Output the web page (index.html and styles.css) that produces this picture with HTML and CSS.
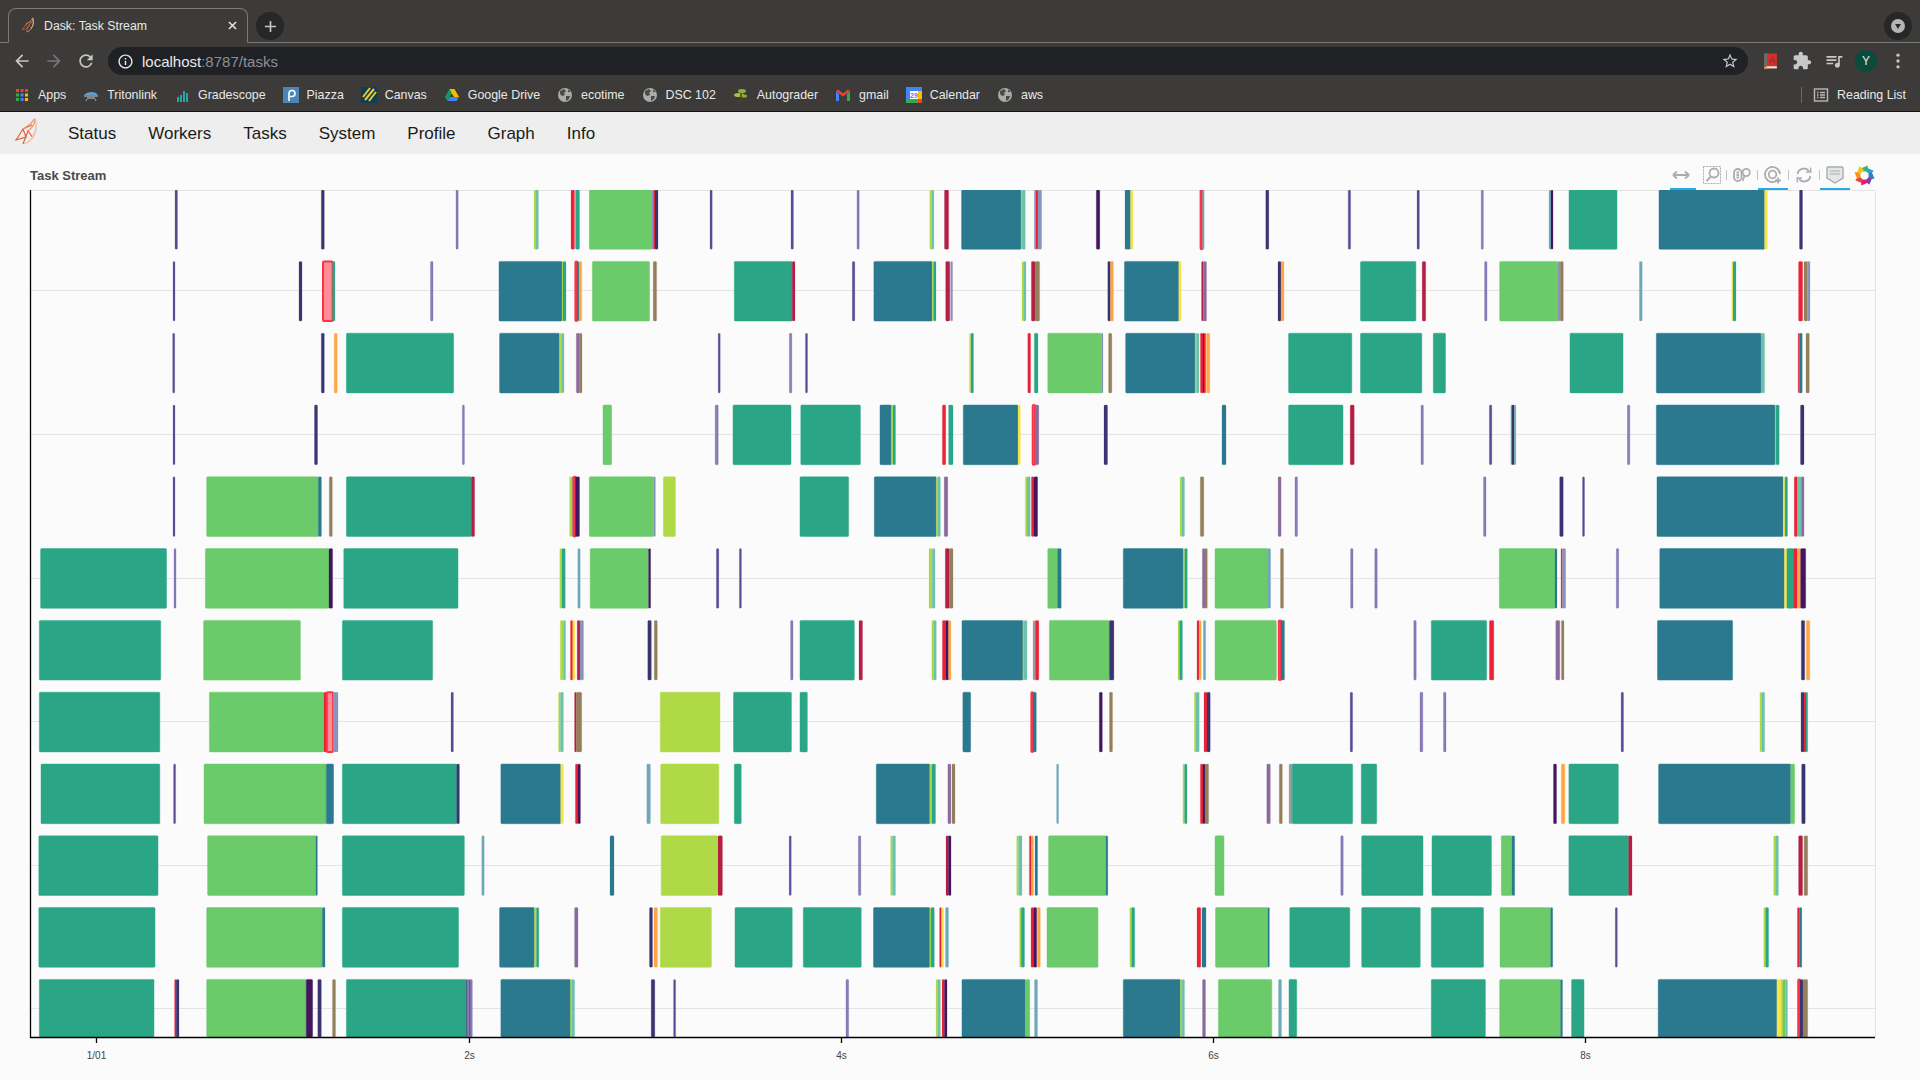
FILE: index.html
```html
<!DOCTYPE html>
<html lang="en">
<head>
    <meta charset="UTF-8">
    <meta name="viewport" content="width=device-width, initial-scale=1.0">
    <title>Dask: Task Stream</title>
    <link rel="stylesheet" href="styles.css">
</head>
<body>
    <svg class="defs">
        <symbol id="dask" viewBox="0 0 40 40">
            <path class="flame-a" d="M6 27 L13 16 L16 24 Z"/>
            <path class="flame-a" d="M13 31 L18 18 L23 25 M13 16 L22 12"/>
            <path class="flame-b" d="M13 16 C18 13 22 11 24 6 M18 18 C22 15 25 11 25 6"/>
            <path class="flame-c" d="M14 31 C23 28 29 17 25 5 M22 24 C26 19 27 12 25 6"/>
        </symbol>
        <symbol id="globe" viewBox="0 0 16 16">
            <circle cx="8" cy="8" r="7" fill="#ababab"/>
            <path d="M3 4 L7 2 L9 4 L7 6 L8 8 L5 9 L3 7 Z M9 9 L13 9 L12 12 L9 14 Z M11 2.5 L14 5 L11 5 Z" fill="#4a4a48"/>
        </symbol>
    </svg>

    <div class="tabstrip">
        <div class="tab">
            <svg class="favicon"><use href="#dask"/></svg>
            <span class="tab-title">Dask: Task Stream</span>
            <svg class="tab-close" viewBox="0 0 10 10"><path d="M1 1 L9 9 M9 1 L1 9"/></svg>
        </div>
        <div class="round-btn new-tab">
            <svg viewBox="0 0 14 14"><path d="M7 1 V13 M1 7 H13"/></svg>
        </div>
        <div class="round-btn tab-menu"><span class="tab-menu-dot"></span></div>
    </div>

    <div class="toolbar">
        <div class="tool"><svg viewBox="0 0 24 24" class="ico"><path d="M20 11H7.83l5.59-5.59L12 4l-8 8 8 8 1.41-1.41L7.83 13H20v-2z"/></svg></div>
        <div class="tool tool-off"><svg viewBox="0 0 24 24" class="ico"><path d="M12 4l-1.41 1.41L16.17 11H4v2h12.17l-5.58 5.59L12 20l8-8z"/></svg></div>
        <div class="tool"><svg viewBox="0 0 24 24" class="ico"><path d="M17.65 6.35A7.958 7.958 0 0012 4c-4.42 0-7.99 3.58-7.99 8s3.57 8 7.99 8c3.73 0 6.84-2.55 7.73-6h-2.08A5.99 5.99 0 0112 18c-3.31 0-6-2.69-6-6s2.69-6 6-6c1.66 0 3.14.69 4.22 1.78L13 11h7V4l-2.35 2.35z"/></svg></div>
        <div class="address">
            <svg viewBox="0 0 24 24" class="ico ico-info"><path d="M11 7h2v2h-2zm0 4h2v6h-2zm1-9C6.48 2 2 6.48 2 12s4.48 10 10 10 10-4.48 10-10S17.52 2 12 2zm0 18c-4.41 0-8-3.59-8-8s3.59-8 8-8 8 3.59 8 8-3.59 8-8 8z"/></svg>
            <span class="url"><span class="url-host">localhost</span>:8787/tasks</span>
            <svg viewBox="0 0 24 24" class="ico ico-star"><path d="M22 9.24l-7.19-.62L12 2 9.19 8.63 2 9.24l5.46 4.73L5.82 21 12 17.27 18.18 21l-1.63-7.03L22 9.24zM12 15.4l-3.76 2.27 1-4.28-3.32-2.88 4.38-.38L12 6.1l1.71 4.04 4.38.38-3.32 2.88 1 4.28L12 15.4z"/></svg>
        </div>
        <div class="tool">
            <svg viewBox="0 0 16 16" class="ext-book">
                <rect x="2" y="0.5" width="12" height="14" fill="#cf322b"/>
                <rect x="2" y="0.5" width="3" height="14" fill="#6a6a6a"/>
                <text x="9.5" y="9" class="book-letter">A</text>
                <rect x="4" y="12.5" width="10" height="2" fill="#e6e6e6"/>
                <rect x="2" y="13" width="3" height="2" fill="#e0a020"/>
            </svg>
        </div>
        <div class="tool"><svg viewBox="0 0 24 24" class="ico"><path d="M20.5 11H19V7c0-1.1-.9-2-2-2h-4V3.5C13 2.12 11.88 1 10.5 1S8 2.12 8 3.5V5H4c-1.1 0-1.99.9-1.99 2v3.8H3.5c1.49 0 2.7 1.21 2.7 2.7s-1.21 2.7-2.7 2.7H2V20c0 1.1.9 2 2 2h3.8v-1.5c0-1.49 1.21-2.7 2.7-2.7 1.49 0 2.7 1.21 2.7 2.7V22H17c1.1 0 2-.9 2-2v-4h1.5c1.38 0 2.5-1.12 2.5-2.5S21.88 11 20.5 11z"/></svg></div>
        <div class="tool"><svg viewBox="0 0 24 24" class="ico"><path d="M15 6H3v2h12V6zm0 4H3v2h12v-2zM3 16h8v-2H3v2zM17 6v8.18c-.31-.11-.65-.18-1-.18-1.66 0-3 1.34-3 3s1.34 3 3 3 3-1.34 3-3V8h3V6h-5z"/></svg></div>
        <div class="tool"><span class="avatar">Y</span></div>
        <div class="tool"><svg viewBox="0 0 24 24" class="ico"><circle cx="12" cy="5" r="2"/><circle cx="12" cy="12" r="2"/><circle cx="12" cy="19" r="2"/></svg></div>
    </div>

    <div class="bookmarks">
        <div class="mark">
            <svg class="mark-ico" viewBox="0 0 16 16">
                <rect x="2" y="2" width="3" height="3" fill="#ea4335"/><rect x="6.5" y="2" width="3" height="3" fill="#ea4335"/><rect x="11" y="2" width="3" height="3" fill="#ea4335"/>
                <rect x="2" y="6.5" width="3" height="3" fill="#34a853"/><rect x="6.5" y="6.5" width="3" height="3" fill="#4285f4"/><rect x="11" y="6.5" width="3" height="3" fill="#fbbc04"/>
                <rect x="2" y="11" width="3" height="3" fill="#34a853"/><rect x="6.5" y="11" width="3" height="3" fill="#4285f4"/><rect x="11" y="11" width="3" height="3" fill="#fbbc04"/>
            </svg>
            <span>Apps</span>
        </div>
        <div class="mark">
            <svg class="mark-ico" viewBox="0 0 16 16">
                <path d="M1 8 C4 5 9 4 13 6 L15 8 Z" fill="#5f9fc9"/>
                <path d="M1 9 H15 M4 11 H12" stroke="#b9d3e4" fill="none"/>
                <path d="M4 12 L3 14 M12 12 L13 14" stroke="#7fb2d2" fill="none"/>
            </svg>
            <span>Tritonlink</span>
        </div>
        <div class="mark">
            <svg class="mark-ico" viewBox="0 0 16 16">
                <rect x="3" y="10" width="2" height="5" fill="#2aa5a8"/><rect x="6" y="8" width="2" height="7" fill="#2aa5a8"/>
                <rect x="9" y="4" width="2" height="11" fill="#2aa5a8"/><rect x="12" y="6" width="2" height="9" fill="#2aa5a8"/>
            </svg>
            <span>Gradescope</span>
        </div>
        <div class="mark">
            <svg class="mark-ico" viewBox="0 0 16 16">
                <rect width="16" height="16" fill="#4a86bb"/>
                <path d="M6 14 V6.5 A3 3 0 1 1 9 9.5 H7" stroke="#fff" stroke-width="1.6" fill="none"/>
            </svg>
            <span>Piazza</span>
        </div>
        <div class="mark">
            <svg class="mark-ico" viewBox="0 0 16 16">
                <rect width="16" height="16" fill="#0c3f50"/>
                <path d="M2 10 L9 1 M4 13 L13 2 M8 14 L15 5" stroke="#f2c531" stroke-width="2" fill="none"/>
            </svg>
            <span>Canvas</span>
        </div>
        <div class="mark">
            <svg class="mark-ico" viewBox="0 0 16 16">
                <path d="M5.5 2 H10.5 L8 7 L5.5 7 Z" fill="#fbbc04"/>
                <path d="M5.5 2 L1 10 L3.5 14 L8 6 Z" fill="#0f9d58"/>
                <path d="M10.5 2 L15 10 H10 L7.5 6 Z" fill="#fbbc04"/>
                <path d="M3.5 14 H12.5 L15 10 H6 Z" fill="#4285f4"/>
            </svg>
            <span>Google Drive</span>
        </div>
        <div class="mark"><svg class="mark-ico"><use href="#globe"/></svg><span>ecotime</span></div>
        <div class="mark"><svg class="mark-ico"><use href="#globe"/></svg><span>DSC 102</span></div>
        <div class="mark">
            <svg class="mark-ico" viewBox="0 0 16 16">
                <ellipse cx="9" cy="4" rx="4" ry="2" fill="#8eb03c"/>
                <ellipse cx="6" cy="8" rx="5" ry="2" fill="#a4c24a"/>
                <ellipse cx="11" cy="9" rx="3" ry="1.5" fill="#8eb03c"/>
                <path d="M8 6 V13" stroke="#5a3c22" stroke-width="1.6"/>
                <rect x="4" y="13" width="8" height="1.5" fill="#5a3c22"/>
            </svg>
            <span>Autograder</span>
        </div>
        <div class="mark">
            <svg class="mark-ico" viewBox="0 0 16 16">
                <path d="M1 4 V14 H4 V7 Z" fill="#4285f4"/>
                <path d="M12 7 V14 H15 V4 Z" fill="#34a853"/>
                <path d="M1 4 L3 2.5 L8 6.5 L13 2.5 L15 4 L8 9.5 Z" fill="#ea4335"/>
            </svg>
            <span>gmail</span>
        </div>
        <div class="mark">
            <svg class="mark-ico" viewBox="0 0 16 16">
                <rect width="16" height="16" fill="#4285f4"/>
                <rect x="12" y="4" width="4" height="8" fill="#fbbc04"/>
                <rect y="12" width="12" height="4" fill="#34a853"/>
                <rect x="12" y="12" width="4" height="4" fill="#ea4335"/>
                <rect x="4" y="4" width="8" height="8" fill="#fff"/>
                <text x="8" y="10.5" class="cal-day">29</text>
            </svg>
            <span>Calendar</span>
        </div>
        <div class="mark"><svg class="mark-ico"><use href="#globe"/></svg><span>aws</span></div>
        <div class="reading">
            <span class="reading-sep"></span>
            <svg class="mark-ico" viewBox="0 0 16 16">
                <rect x="1.5" y="2" width="13" height="12" fill="none" stroke="#b8b8b8" stroke-width="1.4"/>
                <path d="M4 5.5 H5.5 M7 5.5 H12 M4 8 H5.5 M7 8 H12 M4 10.5 H5.5 M7 10.5 H12" stroke="#b8b8b8" stroke-width="1.3"/>
            </svg>
            <span>Reading List</span>
        </div>
    </div>

    <nav class="nav">
        <svg class="nav-logo"><use href="#dask"/></svg>
        <a class="nav-link">Status</a>
        <a class="nav-link">Workers</a>
        <a class="nav-link">Tasks</a>
        <a class="nav-link">System</a>
        <a class="nav-link">Profile</a>
        <a class="nav-link">Graph</a>
        <a class="nav-link">Info</a>
    </nav>

    <main class="plot">
        <div class="plot-head">
            <span class="plot-title">Task Stream</span>
            <div class="plot-tools">
                <div class="pt pt-pan pt-on">
                    <svg viewBox="0 0 20 12" class="pt-ico pt-wide"><path d="M2 6 H18 M2 6 L6 2.5 M2 6 L6 9.5 M18 6 L14 2.5 M18 6 L14 9.5"/></svg>
                </div>
                <div class="pt">
                    <svg viewBox="0 0 18 18" class="pt-ico">
                        <rect x="0.5" y="0.5" width="17" height="17" class="pt-dash"/>
                        <circle cx="11" cy="7" r="4.5"/>
                        <path d="M8 10.5 L3.5 15"/>
                    </svg>
                </div>
                <span class="pt-sep"></span>
                <div class="pt pt-cell">
                    <svg viewBox="0 0 18 18" class="pt-ico">
                        <rect x="1" y="3" width="7.5" height="12" rx="3.7"/>
                        <path d="M3.5 6.5 H6 M3.5 9 H6 M3.5 11.5 H6"/>
                        <circle cx="13.2" cy="6.5" r="3.6"/>
                        <path d="M11.5 10 L9.5 15"/>
                    </svg>
                </div>
                <span class="pt-sep"></span>
                <div class="pt pt-cell pt-on">
                    <svg viewBox="0 0 18 18" class="pt-ico">
                        <path d="M13 14.5 A7.5 7.5 0 1 1 16 8"/>
                        <circle cx="8.5" cy="8.5" r="3.8"/>
                        <path d="M11 14.5 H17 M14 11.5 V17.5"/>
                    </svg>
                </div>
                <span class="pt-sep"></span>
                <div class="pt pt-cell">
                    <svg viewBox="0 0 18 18" class="pt-ico">
                        <path d="M2.5 8 A6.5 6.5 0 0 1 14 5"/>
                        <path d="M15.5 10 A6.5 6.5 0 0 1 4 13"/>
                        <path d="M11 6 L16 6 L15.5 1.5" class="pt-thin"/>
                        <path d="M7 12 L2 12 L2.5 16.5" class="pt-thin"/>
                    </svg>
                </div>
                <span class="pt-sep"></span>
                <div class="pt pt-cell pt-on">
                    <svg viewBox="0 0 18 18" class="pt-ico pt-solid">
                        <path d="M2 1 H16 A1 1 0 0 1 17 2 V12 L9 17 L1 12 V2 A1 1 0 0 1 2 1 Z"/>
                        <path d="M4 5 H14 M4 8 H14" class="pt-lines"/>
                    </svg>
                </div>
                <div class="pt pt-logo">
                    <svg viewBox="-10 -10 20 20" class="pt-ico-logo">
                        <path fill="#3fb36b" transform="rotate(0)" d="M-3 -7 L3 -9.5 L3.4 -4 L-1.6 -3.8 Z"/>
                        <path fill="#25a9c4" transform="rotate(45)" d="M-3 -7 L3 -9.5 L3.4 -4 L-1.6 -3.8 Z"/>
                        <path fill="#3b78c4" transform="rotate(90)" d="M-3 -7 L3 -9.5 L3.4 -4 L-1.6 -3.8 Z"/>
                        <path fill="#7c3fa3" transform="rotate(135)" d="M-3 -7 L3 -9.5 L3.4 -4 L-1.6 -3.8 Z"/>
                        <path fill="#e3187c" transform="rotate(180)" d="M-3 -7 L3 -9.5 L3.4 -4 L-1.6 -3.8 Z"/>
                        <path fill="#f0432f" transform="rotate(225)" d="M-3 -7 L3 -9.5 L3.4 -4 L-1.6 -3.8 Z"/>
                        <path fill="#f98f1e" transform="rotate(270)" d="M-3 -7 L3 -9.5 L3.4 -4 L-1.6 -3.8 Z"/>
                        <path fill="#f2c51d" transform="rotate(315)" d="M-3 -7 L3 -9.5 L3.4 -4 L-1.6 -3.8 Z"/>
                    </svg>
                </div>
            </div>
        </div>

        <svg class="chart" viewBox="0 190 1920 890">
            <path class="grid" d="M31 190.5 H1875.5 V1037 M31 290.5 H1875 M31 434.5 H1875 M31 578.5 H1875 M31 721.5 H1875 M31 865.5 H1875 M31 1008.5 H1875"/>
            <g id="bars"></g>
            <path class="axis" d="M30.5 190 V1037.5 H1875 M96.5 1037 V1043 M469.5 1037 V1043 M841.5 1037 V1043 M1213.5 1037 V1043 M1585.5 1037 V1043"/>
            <text class="tick" x="96.5" y="1059">1/01</text>
            <text class="tick" x="469.5" y="1059">2s</text>
            <text class="tick" x="841.5" y="1059">4s</text>
            <text class="tick" x="1213.5" y="1059">6s</text>
            <text class="tick" x="1585.5" y="1059">8s</text>
        </svg>
    </main>

    <script src="chart.js"></script>
</body>
</html>
```

FILE: styles.css
```css
html, body {
    margin: 0;
    padding: 0;
}
body {
    width: 1920px;
    height: 1080px;
    overflow: hidden;
    background-color: #fbfbfb;
    font-family: "Liberation Sans", Arial, sans-serif;
}
.defs {
    position: absolute;
    width: 0;
    height: 0;
}

/* browser chrome */
.tabstrip {
    box-sizing: border-box;
    height: 43px;
    display: flex;
    align-items: flex-end;
    padding-left: 8px;
    padding-right: 8px;
    background-color: #3c3b39;
    border-bottom: 1px solid #7b7b79;
}
.tab {
    box-sizing: border-box;
    width: 240px;
    height: 35px;
    margin-bottom: -1px;
    display: flex;
    align-items: center;
    padding: 0 10px 0 12px;
    background-color: #3c3b39;
    border: 1px solid #7b7b79;
    border-bottom-color: #3c3b39;
    border-radius: 8px 8px 0 0;
}
.favicon {
    width: 22px;
    height: 22px;
    margin-left: -2px;
    margin-right: 3px;
}
.tab-title {
    flex: 1;
    font-size: 12.3px;
    color: #e8e8e8;
}
.tab-close {
    width: 9px;
    height: 9px;
    fill: none;
    stroke: #e8e8e8;
    stroke-width: 1.6;
}
.round-btn {
    width: 28px;
    height: 28px;
    margin-bottom: 2px;
    display: flex;
    align-items: center;
    justify-content: center;
    border-radius: 50%;
    background-color: #272727;
}
.new-tab {
    margin-left: 8px;
}
.new-tab svg {
    width: 13px;
    height: 13px;
    fill: none;
    stroke: #c4c4c4;
    stroke-width: 1.8;
}
.tab-menu {
    margin-left: auto;
}
.tab-menu-dot {
    position: relative;
    width: 14px;
    height: 14px;
    border-radius: 50%;
    background-color: #b5b5b5;
}
.tab-menu-dot::after {
    content: "";
    position: absolute;
    left: 3.5px;
    top: 5px;
    border-left: 3.5px solid transparent;
    border-right: 3.5px solid transparent;
    border-top: 5px solid #2a2a2a;
}

.toolbar {
    height: 36px;
    display: flex;
    align-items: center;
    padding: 0 6px;
    background-color: #3c3b39;
}
.tool {
    width: 32px;
    height: 28px;
    display: flex;
    align-items: center;
    justify-content: center;
    flex-shrink: 0;
}
.ico {
    width: 20px;
    height: 20px;
    fill: #c8c8c8;
}
.tool-off .ico {
    fill: #76767a;
}
.address {
    flex: 1;
    height: 28px;
    margin: 0 6px;
    display: flex;
    align-items: center;
    padding: 0 9px 0 9px;
    border-radius: 14px;
    background-color: #202124;
}
.ico-info {
    width: 17px;
    height: 17px;
    fill: #e8eaed;
}
.url {
    flex: 1;
    margin-left: 8px;
    font-size: 15px;
    color: #8d9094;
}
.url-host {
    color: #e8eaed;
}
.ico-star {
    width: 18px;
    height: 18px;
    fill: #c8c8c8;
}
.ext-book {
    width: 17px;
    height: 17px;
}
.book-letter {
    font-size: 9px;
    text-anchor: middle;
    fill: #8f1f1a;
}
.avatar {
    width: 22px;
    height: 22px;
    display: flex;
    align-items: center;
    justify-content: center;
    border-radius: 50%;
    background-color: #0b4b3c;
    font-size: 12px;
    color: #e8e8e8;
}

.bookmarks {
    box-sizing: border-box;
    height: 33px;
    display: flex;
    align-items: center;
    gap: 17px;
    padding: 0 14px;
    background-color: #3c3b39;
    border-bottom: 1px solid #141414;
    font-size: 12.4px;
    color: #e8e8e8;
}
.mark {
    display: flex;
    align-items: center;
    gap: 8px;
}
.mark-ico {
    width: 16px;
    height: 16px;
    flex-shrink: 0;
}
.cal-day {
    font-size: 7px;
    font-weight: bold;
    text-anchor: middle;
    fill: #4285f4;
}
.reading {
    margin-left: auto;
    display: flex;
    align-items: center;
    gap: 8px;
}
.reading-sep {
    width: 1px;
    height: 16px;
    margin-right: 3px;
    background-color: #6a6a68;
}

/* dask nav */
.nav {
    box-sizing: border-box;
    height: 42px;
    display: flex;
    align-items: center;
    padding-left: 10px;
    background-color: #eeeeee;
}
.nav-logo {
    width: 40px;
    height: 40px;
    margin-right: 2px;
}
.flame-a, .flame-b, .flame-c {
    fill: none;
    stroke-width: 1.2;
}
.flame-a {
    stroke: #dc6238;
}
.flame-b {
    stroke: #ec9566;
}
.flame-c {
    stroke: #f3bf98;
}
.nav-link {
    padding: 2px 16px 0;
    font-size: 17px;
    color: #1a1a1a;
}

/* plot */
.plot-head {
    height: 36px;
    display: flex;
    align-items: stretch;
    justify-content: space-between;
    padding: 0 45px 0 30px;
}
.plot-title {
    align-self: center;
    margin-top: 6px;
    font-size: 13px;
    font-weight: bold;
    color: #4a4a4a;
}
.plot-tools {
    display: flex;
    align-items: stretch;
}
.pt {
    box-sizing: border-box;
    width: 28px;
    display: flex;
    align-items: center;
    justify-content: center;
    padding-top: 8px;
    border-bottom: 2px solid transparent;
}
.pt-pan {
    width: 26px;
    margin-right: 2px;
    padding-right: 4px;
}
.pt-cell {
    width: 30px;
}
.pt-on {
    border-bottom-color: #26aae1;
}
.pt-sep {
    align-self: center;
    width: 1px;
    height: 10px;
    margin-top: 6px;
    background-color: #c4c4c4;
}
.pt-ico {
    width: 18px;
    height: 18px;
    fill: none;
    stroke: #a9adb0;
    stroke-width: 1.8;
}
.pt-wide {
    width: 20px;
    height: 12px;
}
.pt-dash {
    stroke-width: 1;
    stroke-dasharray: 2 1;
}
.pt-thin {
    stroke-width: 1.4;
}
.pt-solid {
    fill: #e4e6e7;
    stroke-width: 1.4;
}
.pt-lines {
    stroke-width: 1.2;
}
.pt-logo {
    width: 24px;
    margin-left: 1px;
    justify-content: flex-end;
}
.pt-ico-logo {
    width: 21px;
    height: 21px;
}

.chart {
    display: block;
    width: 1920px;
    height: 890px;
}
.grid {
    fill: none;
    stroke: #e4e4e4;
    stroke-width: 1;
}
.axis {
    fill: none;
    stroke: #000000;
    stroke-width: 1.3;
}
.tick {
    font-size: 10px;
    text-anchor: middle;
    fill: #444444;
}

/* task bars, one class per colour */
.bar {
    stroke-width: 1;
    stroke-opacity: 0.45;
}
.bar-thin {
    stroke-width: 0.5;
}
.c-t { fill: #2aa687; stroke: #2aa687; }
.c-g { fill: #6bca69; stroke: #6bca69; }
.c-l { fill: #afd946; stroke: #afd946; }
.c-b { fill: #2b798e; stroke: #2b798e; }
.c-p { fill: #5a4a94; stroke: #5a4a94; }
.c-q { fill: #8d7cb8; stroke: #57459a; }
.c-n { fill: #3a3472; stroke: #3a3472; }
.c-d { fill: #41165f; stroke: #41165f; }
.c-r { fill: #ea2236; stroke: #ea2236; }
.c-c { fill: #b51f45; stroke: #b51f45; }
.c-o { fill: #ffa544; stroke: #ffa544; }
.c-y { fill: #f6e44c; stroke: #f6e44c; }
.c-s { fill: #ff8d97; stroke: #ff3344; stroke-width: 2; stroke-opacity: 1; }
.c-a { fill: #6ea9ba; stroke: #6ea9ba; }
.c-e { fill: #6ec1ab; stroke: #6ec1ab; }
.c-i { fill: #8a94ba; stroke: #8a94ba; }
.c-k { fill: #93805a; stroke: #93805a; }
.c-m { fill: #8a6a9c; stroke: #8a6a9c; }
.c-h { fill: #9c9c9c; stroke: #9c9c9c; }
```

FILE: chart.js
```js
// task bars as [start, end, colour], one list per worker row
var rows = [
    [
        [175, 177.5, "p"], [321.3, 324.3, "n"], [456, 458.2, "q"], [534, 535.6, "l"], [535.6, 538.4, "e"],
        [571, 574.5, "r"], [575.5, 579.5, "t"], [589.3, 651.5, "g"], [651.5, 653.5, "i"], [653.5, 655, "r"], [655, 658, "n"],
        [710, 712.2, "p"], [791, 793.4, "p"], [857, 859.2, "q"], [929.8, 931.6, "l"], [931.6, 933.9, "e"],
        [944.5, 948.6, "c"], [961.6, 1021, "b"], [1021, 1022, "l"], [1022, 1025.3, "e"],
        [1034.3, 1036, "i"], [1036, 1038, "r"], [1038, 1041.6, "i"], [1096.3, 1099.8, "d"],
        [1125, 1130.6, "b"], [1130.6, 1133, "y"], [1200.6, 1202.4, "s"], [1202.4, 1204.2, "a"], [1265.8, 1268.8, "n"],
        [1348.2, 1350.6, "p"], [1417, 1419.4, "p"], [1481.2, 1483.4, "q"], [1549, 1551, "a"], [1551, 1553, "d"],
        [1569, 1617, "t"], [1659, 1764.6, "b"], [1764.6, 1767.4, "y"], [1799.5, 1802.5, "n"]
    ],
    [
        [173, 175, "p"], [299, 302, "n"], [323, 332.6, "s"], [332.6, 335, "t"], [430.5, 433, "q"],
        [499, 562, "b"], [562, 563, "l"], [563, 566, "t"], [575.4, 577, "s"], [577, 579, "b"], [579, 581.7, "o"],
        [592.4, 649.5, "g"], [653.2, 656.6, "k"],
        [734.3, 792.2, "t"], [792.2, 795, "c"], [852.3, 854.8, "p"], [873.9, 932.2, "b"], [932.2, 933.6, "l"], [933.6, 936, "t"],
        [945.7, 949.8, "c"], [950.6, 952.6, "i"], [1022, 1023.5, "l"], [1023.5, 1026, "e"], [1031.4, 1035, "c"], [1035, 1039.6, "k"],
        [1107.8, 1110.5, "n"], [1110.5, 1113.5, "o"], [1124.5, 1178.8, "b"], [1178.8, 1181.2, "y"], [1201.6, 1203.4, "c"], [1203.4, 1206.5, "m"],
        [1278, 1281, "n"], [1281, 1284, "o"],
        [1360.5, 1415.9, "t"], [1422.2, 1425.7, "c"], [1484.6, 1487, "q"], [1499.7, 1557.8, "g"], [1557.8, 1560.2, "i"], [1560.2, 1563.3, "k"],
        [1639.4, 1642.2, "a"], [1731.8, 1733, "y"], [1733, 1736, "t"], [1798.6, 1802.6, "r"], [1804, 1807.3, "k"], [1807.3, 1810, "i"]
    ],
    [
        [172.7, 174.7, "p"], [321.3, 324.3, "n"], [334.2, 337.2, "o"], [346.4, 453.6, "t"],
        [499.6, 559.4, "b"], [559.4, 562, "l"], [562, 564, "e"], [576.3, 579.5, "m"], [579.5, 582, "k"],
        [718.2, 720.2, "p"], [789.4, 791.8, "q"], [805.5, 807.5, "p"], [969, 970.8, "y"], [970.8, 973.5, "t"],
        [1027.8, 1030.6, "r"], [1034.3, 1038, "t"], [1047.8, 1101.6, "g"], [1101.6, 1103, "i"], [1108.6, 1111.8, "k"],
        [1125.7, 1195, "b"], [1195, 1196.2, "l"], [1196.2, 1199, "e"], [1200.4, 1203, "r"], [1203, 1204, "d"], [1204, 1205.7, "r"], [1206.5, 1209.8, "o"],
        [1288.6, 1351.8, "t"], [1360.5, 1421.8, "t"], [1433.3, 1445.5, "t"], [1570, 1623, "t"],
        [1656.3, 1761, "b"], [1761, 1764.6, "e"], [1798.2, 1799.6, "r"], [1799.6, 1802.2, "b"], [1806, 1809.3, "k"]
    ],
    [
        [173, 175, "p"], [314.5, 317.5, "n"], [462.4, 464.4, "q"], [603, 611.6, "g"],
        [715.2, 718.2, "q"], [733, 791, "t"], [800.8, 860.4, "t"], [880, 891.4, "b"], [891.4, 893, "l"], [893, 895.5, "t"],
        [942.4, 945.7, "r"], [948.6, 953, "t"], [963.3, 1018, "b"], [1018, 1020.4, "y"], [1032.7, 1035, "s"], [1035, 1038.8, "m"],
        [1104, 1107.5, "n"], [1222, 1226, "b"], [1288.6, 1343, "t"], [1350.2, 1354.2, "c"],
        [1421, 1423.4, "q"], [1489.4, 1491.8, "p"], [1510.8, 1511.8, "e"], [1511.8, 1514.5, "n"], [1514.5, 1516, "e"],
        [1627.4, 1629.8, "q"], [1656.3, 1775, "b"], [1775, 1776, "l"], [1776, 1779.2, "t"], [1800.5, 1804, "n"]
    ],
    [
        [173, 175, "p"], [206.7, 318.3, "g"], [318.3, 321.4, "b"], [329.3, 332.3, "k"], [346.4, 471.4, "t"], [471.4, 474.6, "c"],
        [569.6, 571.5, "l"], [571.5, 573.5, "e"], [573.5, 575.5, "s"], [575.5, 579.5, "d"], [589.3, 653.6, "g"], [653.6, 655.4, "i"], [663.4, 675.4, "l"],
        [800, 848.6, "t"], [874.3, 936.3, "b"], [936.3, 937.8, "l"], [937.8, 940.4, "e"], [944.2, 947.8, "m"],
        [1025.3, 1027, "l"], [1027, 1030.2, "e"], [1031.4, 1034, "r"], [1034, 1037.6, "d"], [1180, 1181.8, "l"], [1181.8, 1184.5, "e"],
        [1200.3, 1203.8, "k"], [1278.1, 1281.1, "m"], [1295, 1297.5, "q"],
        [1483.5, 1486, "q"], [1559.7, 1563.2, "n"], [1582.5, 1584.5, "p"], [1657, 1783.2, "b"], [1783.2, 1785, "y"], [1785, 1787.5, "t"],
        [1794.3, 1797.5, "r"], [1797.5, 1801.4, "e"], [1801.4, 1804, "m"]
    ],
    [
        [40.6, 166.5, "t"], [174, 176, "q"], [205.4, 329, "g"], [329, 332.6, "d"], [343.8, 458, "t"],
        [559.8, 562, "l"], [562, 565.2, "t"], [577.8, 580.2, "a"], [590.2, 648.6, "g"], [648.6, 650.6, "d"],
        [716.4, 718.8, "p"], [739.4, 741.4, "p"], [929, 932.2, "l"], [932.2, 935, "e"], [945.3, 949.4, "c"], [949.4, 953, "k"],
        [1047.8, 1057.6, "g"], [1057.6, 1061.2, "b"], [1123.3, 1183.3, "b"], [1183.3, 1184.8, "l"], [1184.8, 1187.3, "t"],
        [1202.4, 1205, "m"], [1205, 1207.3, "k"], [1215, 1268, "g"], [1268, 1270.6, "a"], [1280.5, 1283.5, "k"],
        [1350.6, 1353, "q"], [1374.8, 1377.2, "q"], [1499.3, 1555, "g"], [1555, 1557, "b"], [1561, 1562.5, "r"], [1562.5, 1565.7, "i"],
        [1616.3, 1618.7, "q"], [1659.8, 1784.4, "b"], [1784.4, 1787, "y"], [1787, 1793.4, "t"], [1793.4, 1797.4, "r"], [1797.4, 1800.6, "o"], [1800.6, 1805.7, "d"]
    ],
    [
        [39.3, 160.7, "t"], [203.6, 300.4, "g"], [342.4, 432.6, "t"], [560.3, 563.4, "l"], [563.4, 565.6, "e"],
        [570.5, 572.8, "r"], [572.8, 575, "y"], [577.2, 580, "c"], [580, 583.5, "i"], [647.8, 651.3, "n"], [654.3, 657.3, "k"],
        [790.6, 793, "q"], [800, 854.3, "t"], [859, 862.5, "c"], [931.8, 933.5, "l"], [933.5, 936.3, "e"], [942.4, 946, "r"], [946, 948.6, "d"], [948.6, 951, "o"],
        [962, 1022.9, "b"], [1022.9, 1024, "l"], [1024, 1027, "e"], [1033, 1035, "h"], [1035.3, 1038.8, "r"],
        [1049.4, 1109.4, "g"], [1109.4, 1113.9, "n"], [1178, 1179.6, "l"], [1179.6, 1182.4, "t"], [1197, 1199.2, "r"], [1199.2, 1201.2, "o"], [1203.3, 1205.7, "a"],
        [1215, 1276.3, "g"], [1278.8, 1281, "s"], [1281, 1284.5, "b"],
        [1413.8, 1416.2, "q"], [1431.3, 1486.6, "t"], [1489.4, 1493.8, "r"], [1555.8, 1559.8, "m"], [1561.4, 1564, "k"], [1657.5, 1732.6, "b"],
        [1801.3, 1804.7, "n"], [1806.3, 1809.8, "o"]
    ],
    [
        [39.3, 159.8, "t"], [209.4, 324, "g"], [324, 326.8, "r"], [326.8, 333, "s"], [333, 338, "i"], [451, 453.4, "p"],
        [558.5, 560.4, "l"], [560.4, 563.4, "e"], [574.6, 576.5, "c"], [576.5, 581.7, "k"], [660.3, 720, "l"],
        [733.5, 791.4, "t"], [800, 807.3, "t"], [962.9, 970.6, "b"], [1031.4, 1033, "s"], [1033, 1036.3, "b"],
        [1099.3, 1102.3, "d"], [1109.5, 1112.5, "k"], [1194.3, 1196, "l"], [1196, 1199.2, "e"], [1204, 1207, "r"], [1207, 1210.2, "n"],
        [1350.2, 1352.6, "p"], [1420, 1422.8, "q"], [1443.5, 1446, "q"], [1621.1, 1623.5, "p"], [1759.9, 1761.8, "l"], [1761.8, 1764.6, "e"],
        [1801, 1804, "n"], [1804, 1806, "r"], [1806, 1807.7, "t"]
    ],
    [
        [41, 159.8, "t"], [173.6, 175.6, "p"], [204, 326.3, "g"], [326.3, 333.5, "b"], [342.4, 456.7, "t"], [456.7, 459.4, "n"],
        [500.9, 560.7, "b"], [560.7, 563.4, "y"], [575.4, 578, "r"], [578, 580.4, "d"], [646.8, 650.4, "a"], [660.7, 718.8, "l"],
        [734.3, 741.2, "t"], [876.3, 929.8, "b"], [929.8, 932, "l"], [932, 935.5, "t"], [947.9, 950.9, "m"], [952, 955, "k"],
        [1056.6, 1058.6, "a"], [1182.9, 1184.6, "l"], [1184.6, 1187, "t"], [1200.4, 1203, "r"], [1203, 1205, "d"], [1205, 1208.6, "k"],
        [1266.8, 1270.3, "m"], [1279.3, 1282.3, "k"], [1289, 1292.2, "h"], [1292.2, 1352.6, "t"], [1361.3, 1376.7, "t"],
        [1553.5, 1556.5, "d"], [1561.3, 1564.8, "o"], [1568.9, 1618.3, "t"], [1658.6, 1790.7, "b"], [1790.7, 1794.7, "g"], [1801.7, 1805.2, "n"]
    ],
    [
        [38.8, 158, "t"], [207.6, 316, "g"], [316, 317.4, "b"], [342.4, 464.3, "t"], [481.8, 484.2, "a"], [610, 614, "b"], [661.2, 717.6, "l"],
        [718, 722.4, "c"], [789.2, 791.2, "p"], [858.4, 860.8, "q"], [890.6, 892.4, "l"], [892.4, 895.5, "e"], [946, 948.4, "c"], [948.4, 951, "d"],
        [1016.7, 1018.6, "l"], [1018.6, 1022, "e"], [1029.4, 1031.4, "r"], [1031.4, 1033.5, "o"], [1035, 1037.6, "b"],
        [1048.6, 1106, "g"], [1106, 1107.8, "b"], [1215, 1224, "g"],
        [1340.8, 1343.2, "q"], [1361.7, 1423, "t"], [1432, 1491.4, "t"], [1501.3, 1512, "g"], [1512, 1514.7, "b"], [1568.9, 1628.6, "t"], [1628.6, 1632, "c"],
        [1773.7, 1775.4, "l"], [1775.4, 1778.4, "e"], [1798.6, 1802.6, "c"], [1804.1, 1807.7, "k"]
    ],
    [
        [38.8, 155, "t"], [206.7, 322.3, "g"], [322.3, 325, "b"], [342.4, 458.5, "t"], [499.6, 534.4, "b"], [534.4, 536.5, "l"], [536.5, 538.8, "t"],
        [574.6, 578, "m"], [649.5, 652.5, "n"], [654, 657.5, "o"], [660.3, 711.4, "l"],
        [735, 792.2, "t"], [803.3, 861.2, "t"], [873.5, 929.8, "b"], [929.8, 931, "l"], [931, 934.3, "t"],
        [939.6, 941.6, "r"], [941.6, 943.7, "y"], [945.5, 948.5, "a"], [1019.6, 1021.2, "l"], [1021.2, 1024.5, "t"],
        [1031, 1033.4, "r"], [1033.4, 1036.7, "d"], [1037.3, 1040.3, "o"], [1047, 1098, "g"], [1129.8, 1131.6, "l"], [1131.6, 1134.7, "t"],
        [1197, 1200.8, "r"], [1202, 1206, "b"], [1215.5, 1268, "g"], [1268, 1269.4, "b"],
        [1289.8, 1349.8, "t"], [1361.7, 1420.2, "t"], [1431.3, 1483.5, "t"], [1500, 1550.7, "g"], [1550.7, 1552.7, "b"],
        [1615.3, 1617.3, "p"], [1763.8, 1765.6, "l"], [1765.6, 1768.6, "t"], [1797.4, 1799.4, "r"], [1799.4, 1801.8, "b"]
    ],
    [
        [39.3, 154, "t"], [174.6, 176.2, "r"], [176.2, 179, "n"], [206.7, 306.3, "g"], [306.3, 312.5, "d"], [317.8, 321.3, "n"], [332.5, 335.5, "k"],
        [346.4, 466.5, "t"], [466.5, 467.5, "n"], [467.5, 469.5, "q"], [469.5, 470.5, "n"], [470.5, 472.3, "q"],
        [500.9, 570.5, "b"], [570.5, 571.6, "l"], [571.6, 574.6, "e"], [651.2, 654.8, "n"], [673.6, 675.6, "p"],
        [846, 848.6, "q"], [936, 937.8, "l"], [937.8, 940.4, "e"], [942, 944.4, "r"], [944.4, 947, "d"],
        [962, 1025.3, "b"], [1025.3, 1029.8, "g"], [1034.5, 1037.5, "a"], [1123.3, 1180.4, "b"], [1180.4, 1182, "l"], [1182, 1184.5, "e"], [1202.5, 1205.5, "m"],
        [1218.4, 1271.8, "g"], [1278.5, 1281.5, "a"], [1289, 1296.7, "t"],
        [1431.3, 1485.4, "t"], [1499.7, 1560.6, "g"], [1560.6, 1562.5, "b"], [1571.6, 1584, "t"], [1658.2, 1776.9, "b"], [1776.9, 1781.2, "y"],
        [1781.2, 1783, "l"], [1783, 1785.5, "g"], [1785.5, 1787.5, "e"], [1798.2, 1800, "s"], [1800, 1803, "n"], [1803, 1807.7, "k"]
    ]
];

var barsGroup = document.getElementById("bars");

function addBar(rowIndex, bar) {
    var top = 189.6 + rowIndex * 71.8;
    var bottom = Math.min(top + 59.7, 1037);
    top = Math.max(top, 190);

    var width = bar[1] - bar[0];
    var rect = document.createElementNS("http://www.w3.org/2000/svg", "rect");
    rect.setAttribute("x", bar[0]);
    rect.setAttribute("y", top);
    rect.setAttribute("width", width);
    rect.setAttribute("height", bottom - top);
    rect.setAttribute("rx", 1);
    rect.setAttribute("class", "bar c-" + bar[2] + (width < 6 ? " bar-thin" : ""));
    barsGroup.appendChild(rect);
}

for (var i = 0; i < rows.length; i++) {
    for (var j = 0; j < rows[i].length; j++) {
        addBar(i, rows[i][j]);
    }
}
```
